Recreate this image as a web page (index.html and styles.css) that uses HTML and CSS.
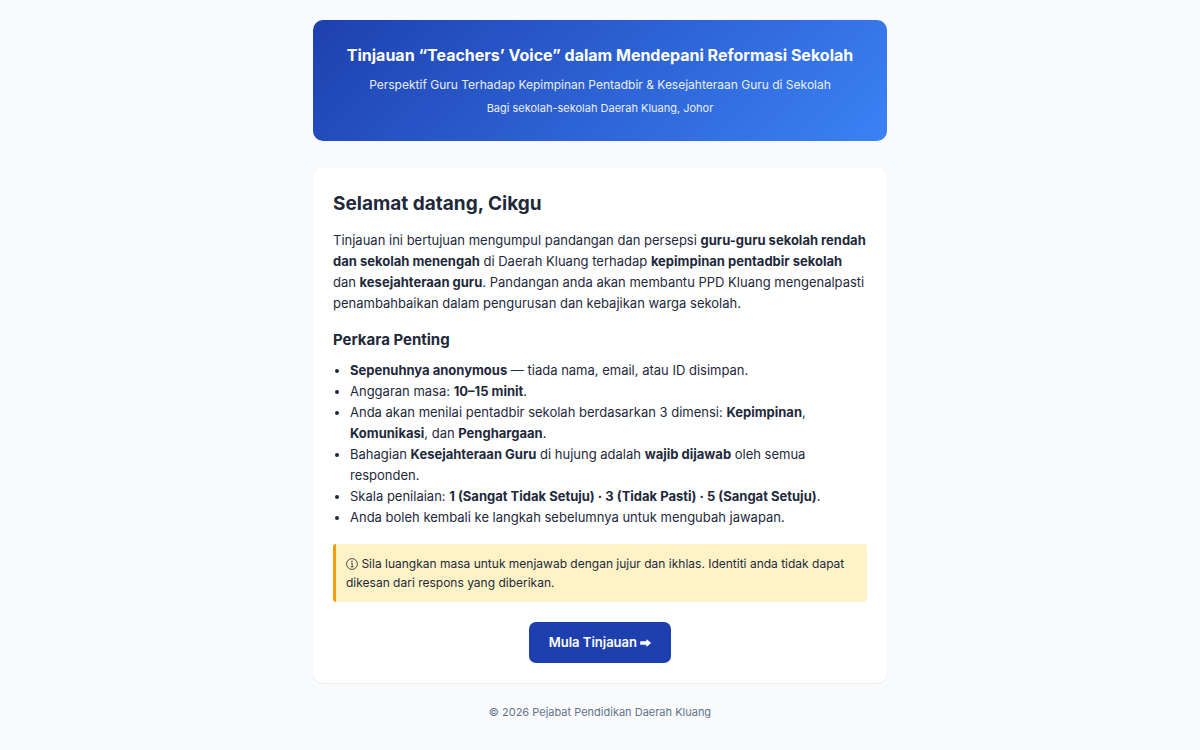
FILE: index.html
```html
<!DOCTYPE html>
<html lang="ms">
<head>
    <meta charset="UTF-8">
    <meta name="viewport" content="width=device-width, initial-scale=1.0">
    <title>Tinjauan Teachers' Voice</title>
    <link rel="stylesheet" href="styles.css">
</head>
<body>

<div class="container">
    <header class="banner">
        <h1>Tinjauan “Teachers’ Voice” dalam Mendepani Reformasi Sekolah</h1>
        <p class="subtitle">Perspektif Guru Terhadap Kepimpinan Pentadbir &amp; Kesejahteraan Guru di Sekolah</p>
        <p class="area">Bagi sekolah-sekolah Daerah Kluang, Johor</p>
    </header>

    <main class="card">
        <h2>Selamat datang, Cikgu</h2>
        <p>Tinjauan ini bertujuan mengumpul pandangan dan persepsi <strong>guru-guru sekolah rendah dan sekolah menengah</strong> di Daerah Kluang terhadap <strong>kepimpinan pentadbir sekolah</strong> dan <strong>kesejahteraan guru</strong>. Pandangan anda akan membantu PPD Kluang mengenalpasti penambahbaikan dalam pengurusan dan kebajikan warga sekolah.</p>

        <h3>Perkara Penting</h3>
        <ul>
            <li><strong>Sepenuhnya anonymous</strong> — tiada nama, email, atau ID disimpan.</li>
            <li>Anggaran masa: <strong>10–15 minit</strong>.</li>
            <li>Anda akan menilai pentadbir sekolah berdasarkan 3 dimensi: <strong>Kepimpinan</strong>, <strong>Komunikasi</strong>, dan <strong>Penghargaan</strong>.</li>
            <li>Bahagian <strong>Kesejahteraan Guru</strong> di hujung adalah <strong>wajib dijawab</strong> oleh semua responden.</li>
            <li>Skala penilaian: <strong>1 (Sangat Tidak Setuju) · 3 (Tidak Pasti) · 5 (Sangat Setuju)</strong>.</li>
            <li>Anda boleh kembali ke langkah sebelumnya untuk mengubah jawapan.</li>
        </ul>

        <div class="note">
            <svg class="info-icon" viewBox="0 0 12 12" aria-hidden="true">
                <circle cx="6" cy="6" r="5.4"/>
                <path d="M5 5H6.2V8.8M4.8 8.8H7.5"/>
                <circle class="dot" cx="6" cy="3.2" r=".7"/>
            </svg>
            Sila luangkan masa untuk menjawab dengan jujur dan ikhlas. Identiti anda tidak dapat dikesan dari respons yang diberikan.
        </div>

        <div class="actions">
            <button type="button" class="btn">Mula Tinjauan
                <svg class="arrow-icon" viewBox="0 0 11 8" aria-hidden="true">
                    <path d="M.8 2.2H6.3V.9Q6.3.1 7 .6L10.6 3.5Q11 4 10.6 4.5L7 7.4Q6.3 7.9 6.3 7.1V5.8H.8Q.2 5.8.2 5.2V2.8Q.2 2.2.8 2.2Z"/>
                </svg>
            </button>
        </div>
    </main>

    <footer>© 2026 Pejabat Pendidikan Daerah Kluang</footer>
</div>

</body>
</html>
```
FILE: styles.css
```css
* {
    box-sizing: border-box;
    margin: 0;
    padding: 0;
}
body {
    background: #f8fafc;
    color: #1e293b;
    font-family: Inter, "Liberation Sans", sans-serif;
    font-size: 13px;
    line-height: 21px;
}
.container {
    max-width: 614px;
    margin: 0 auto;
    padding: 20px;
}
.banner {
    background: linear-gradient(135deg, #1e40af, #3b82f6);
    color: white;
    text-align: center;
    padding: 22px 20px 24px;
    border-radius: 10px;
    margin-bottom: 27px;
}
h1 {
    font-size: 16px;
    line-height: 27px;
    margin-bottom: 6px;
}
.subtitle {
    font-size: 12px;
    line-height: 20px;
    margin-bottom: 4px;
    opacity: 0.9;
}
.area {
    font-size: 11px;
    line-height: 18px;
    opacity: 0.9;
}
.card {
    background: white;
    padding: 20px;
    border-radius: 10px;
    box-shadow: 0 1px 2px rgba(0, 0, 0, 0.06);
}
h2 {
    font-size: 19px;
    line-height: 32px;
    margin-bottom: 10px;
}
h3 {
    font-size: 15px;
    line-height: 27px;
    margin: 12px 0 7px;
}
ul {
    padding-left: 17px;
}
.note {
    background: #fef3c7;
    border-left: 3px solid #f59e0b;
    border-radius: 3px;
    padding: 10px;
    margin: 16px 0 20px;
    font-size: 12px;
    line-height: 19px;
}
.info-icon {
    width: 12px;
    height: 12px;
    vertical-align: -2px;
    fill: none;
    stroke: #1e293b;
    stroke-width: 0.8;
}
.info-icon .dot {
    fill: #1e293b;
    stroke: none;
}
.actions {
    text-align: center;
}
.btn {
    display: inline-block;
    background: #1e40af;
    color: white;
    border: none;
    border-radius: 7px;
    padding: 10px 20px;
    font: inherit;
    font-weight: 600;
    cursor: pointer;
    vertical-align: top;
}
.arrow-icon {
    width: 11px;
    height: 8px;
    fill: white;
}
footer {
    text-align: center;
    color: #64748b;
    font-size: 11px;
    line-height: 18px;
    margin-top: 20px;
}
```
